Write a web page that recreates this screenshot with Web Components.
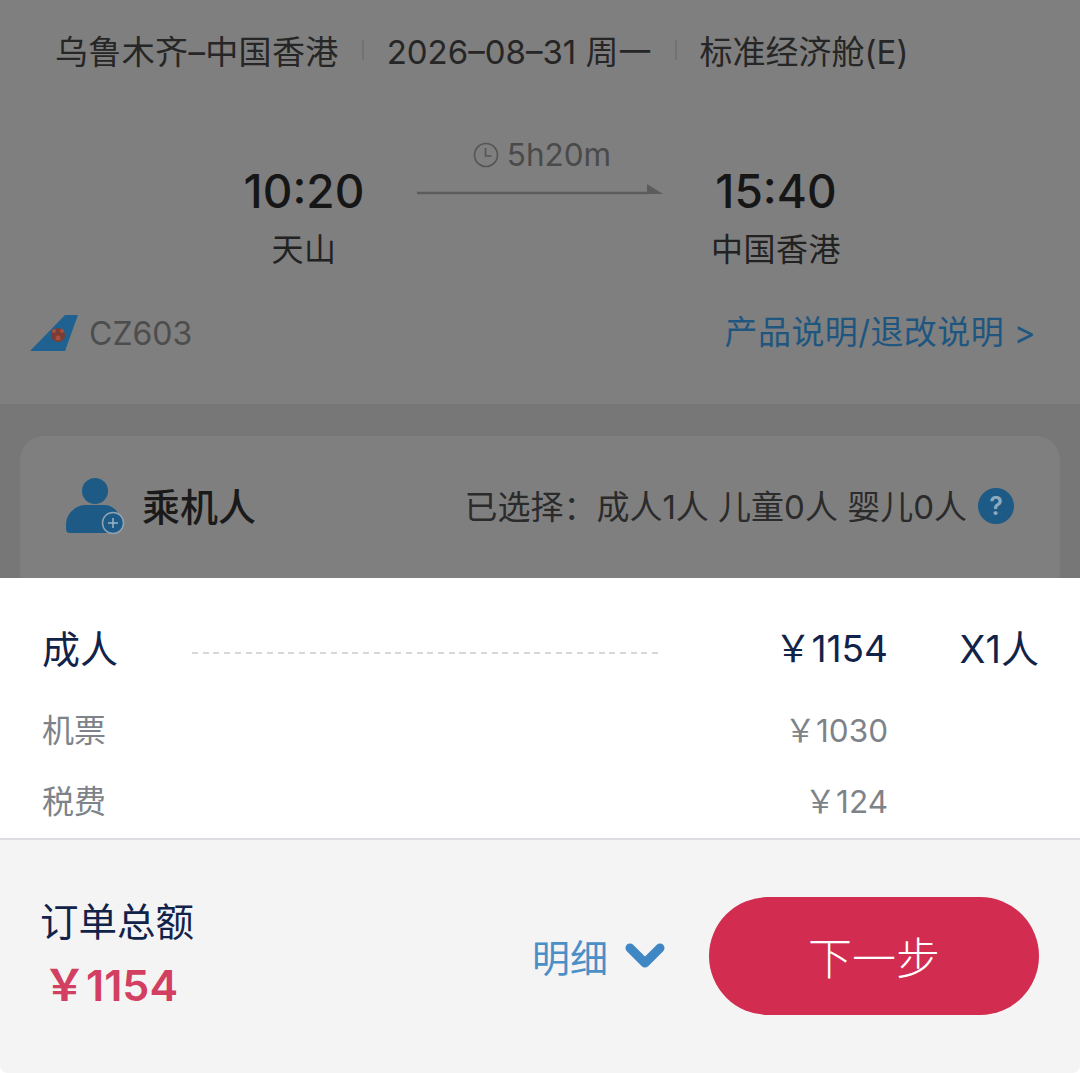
<!DOCTYPE html>
<html lang="zh">
<head>
<meta charset="utf-8">
<title>订单</title>
<style>
html, body { margin: 0; padding: 0; }
body { width: 1080px; height: 1073px; overflow: hidden; background: #fff;
  font-family: "Noto Sans CJK SC", "Liberation Sans", sans-serif; }
</style>
</head>
<body>
<booking-page>
  <flight-summary></flight-summary>
  <passenger-card></passenger-card>
  <price-sheet></price-sheet>
  <order-footer></order-footer>
</booking-page>

<script>
const LATIN = '"Inter", "Noto Sans CJK SC", sans-serif';

class BookingPage extends HTMLElement {
    constructor() {
        super();
        this.attachShadow({ mode: 'open' }).innerHTML = `
        <style>
        :host { display: flex; flex-direction: column; width: 1080px; height: 1073px; overflow: hidden; }
        </style>
        <slot></slot>`;
    }
}

class FlightSummary extends HTMLElement {
    constructor() {
        super();
        this.attachShadow({ mode: 'open' }).innerHTML = `
        <style>
        :host { display: block; height: 404px; box-sizing: border-box; background: #7f7f7f; color: #1f1f1f;
            font-family: ${LATIN}; }
        .route { display: flex; align-items: center; height: 100px; margin-bottom: 6px; padding-left: 55px; font-size: 33px; color: #262626; }
        .route span:first-child { letter-spacing: .35px; }
        .sep { width: 2px; height: 20px; background: #727272; margin: 0 23px; }
        .times { display: grid; grid-template-columns: 120px 246px 120px; column-gap: 53px; justify-content: center; height: 190px; }
        .end { display: flex; flex-direction: column; align-items: center; padding-top: 56px; }
        .time { font-size: 46px; font-weight: 500; line-height: 58px; color: #161616; }
        .place { font-size: 32px; line-height: 46px; margin-top: 7px; color: #222; white-space: nowrap; letter-spacing: .5px; }
        .mid { display: flex; flex-direction: column; align-items: stretch; padding-top: 28px; }
        .dur { display: flex; align-items: center; justify-content: center; gap: 8px; padding-left: 4px; font-size: 31.5px; line-height: 42px; color: #4a4a4a; }
        .line { display: block; margin-top: 8px; }
        .foot { display: flex; justify-content: space-between; align-items: center; padding: 0 44px 0 30px; height: 60px; margin-top: 7px; }
        .air { display: flex; align-items: center; gap: 11px; font-size: 32px; color: #4d4d4d; }
        .link { font-size: 33px; letter-spacing: .4px; color: #1f567f; margin-bottom: 6px; }
        </style>
        <div class="route">
            <span>乌鲁木齐–中国香港</span><i class="sep"></i>
            <span>2026–08–31 周一</span><i class="sep"></i>
            <span>标准经济舱(E)</span>
        </div>
        <div class="times">
            <div class="end"><span class="time">10:20</span><span class="place">天山</span></div>
            <div class="mid">
                <div class="dur">
                    <svg width="26" height="26" viewBox="0 0 26 26" fill="none" stroke="#555" stroke-width="1.6"><circle cx="13" cy="13" r="11.5"/><path d="M12.5 6v8h6"/></svg>
                    <span>5h20m</span>
                </div>
                <svg class="line" width="246" height="14" viewBox="0 0 246 14"><path d="M0 9h232" stroke="#5c5c5c" stroke-width="2.5"/><path d="M230 0l16 10h-16z" fill="#5c5c5c"/></svg>
            </div>
            <div class="end"><span class="time">15:40</span><span class="place">中国香港</span></div>
        </div>
        <div class="foot">
            <div class="air">
                <svg width="48" height="38" viewBox="0 0 48 38"><path d="M35 1H48L35 37H0z" fill="#1f6292"/><circle cx="28" cy="21" r="7" fill="#7d3c33"/><circle cx="24" cy="17" r="2" fill="#a2503f"/><circle cx="32" cy="17" r="2" fill="#a2503f"/><circle cx="28" cy="24" r="2.5" fill="#a2503f"/></svg>
                <span>CZ603</span>
            </div>
            <span class="link">产品说明/退改说明 &gt;</span>
        </div>`;
    }
}

class PassengerCard extends HTMLElement {
    constructor() {
        super();
        this.attachShadow({ mode: 'open' }).innerHTML = `
        <style>
        :host { display: block; height: 174px; box-sizing: border-box; background: #777; padding: 32px 20px 0; font-family: ${LATIN}; }
        .card { height: 142px; box-sizing: border-box; padding: 42px 46px 0; background: #7f7f7f; border-radius: 24px 24px 0 0; }
        .row { display: flex; align-items: center; justify-content: space-between; height: 56px; }
        .who { display: flex; align-items: center; gap: 16px; font-size: 38px; font-weight: 500; color: #1a1a1a; }
        .who svg { flex: none; }
        .who span { margin-bottom: 4px; }
        .sel { display: flex; align-items: center; gap: 11px; font-size: 33px; color: #2b2b2b; }
        .sel span:first-child { margin-bottom: 2px; }
        .q { width: 36px; height: 36px; border-radius: 50%; background: #1d5a86; color: #8fa9bd; font-size: 25px; font-weight: 600;
            display: flex; align-items: center; justify-content: center; }
        </style>
        <div class="card">
            <div class="row">
                <div class="who">
                    <svg width="60" height="58" viewBox="0 0 60 58"><circle cx="29" cy="14" r="13" fill="#1d5a86"/><path d="M4 56Q0 56 0 52V48C0 36 10 28 20 28H38C44 28 49 31 52 36H46A14 14 0 0 0 42 56z" fill="#1d5a86"/><circle cx="47" cy="46" r="10.5" fill="#1d5a86" stroke="#8fa3b3" stroke-width="1.5"/><path d="M47 41v10M42 46h10" stroke="#9db4c5" stroke-width="1.5"/></svg>
                    <span>乘机人</span>
                </div>
                <div class="sel"><span>已选择：成人1人 儿童0人 婴儿0人</span><span class="q">?</span></div>
            </div>
        </div>`;
    }
}

class PriceRow extends HTMLElement {
    constructor() {
        super();
        this.attachShadow({ mode: 'open' }).innerHTML = `
        <style>
        :host { display: flex; align-items: center; height: 71px; padding-left: 42px; color: #7d8388; font-size: 32px; }
        :host([main]) { color: #12234a; font-size: 38px; height: 84px; margin-bottom: 4px; }
        .label { flex: none; width: 150px; }
        .dash { flex: none; width: 470px; height: 2px; margin-top: 14px; visibility: hidden;
            background: repeating-linear-gradient(90deg, #d5d7da 0 6px, transparent 6px 10.7px); }
        :host([main]) .dash { visibility: visible; }
        .price { flex: none; width: 226px; text-align: right; font-family: ${LATIN}; font-size: 31.5px; }
        :host([main]) .price { font-size: 37px; }
        .count { flex: none; width: 151px; text-align: right; font-family: ${LATIN}; }
        </style>
        <span class="label"><slot name="label"></slot></span>
        <span class="dash"></span>
        <span class="price"><slot name="price"></slot></span>
        <span class="count"><slot name="count"></slot></span>`;
    }
}

class PriceSheet extends HTMLElement {
    constructor() {
        super();
        this.attachShadow({ mode: 'open' }).innerHTML = `
        <style>
        :host { display: block; height: 262px; box-sizing: border-box; background: #fff; padding-top: 26px; border-bottom: 2px solid #dcdde0; }
        </style>
        <price-row main><span slot="label">成人</span><span slot="price">￥1154</span><span slot="count">X1人</span></price-row>
        <price-row><span slot="label">机票</span><span slot="price">￥1030</span></price-row>
        <price-row><span slot="label">税费</span><span slot="price">￥124</span></price-row>`;
    }
}

class OrderFooter extends HTMLElement {
    constructor() {
        super();
        this.attachShadow({ mode: 'open' }).innerHTML = `
        <style>
        :host { display: flex; align-items: center; justify-content: space-between; height: 233px; box-sizing: border-box;
            padding: 0 41px 2px 42px; background: #f4f4f5; border-radius: 0 0 8px 8px; }
        .total { display: flex; flex-direction: column; padding-bottom: 3px; margin-left: -2px; }
        .t1 { font-size: 38.5px; line-height: 54px; color: #12234a; }
        .t2 { font-family: ${LATIN}; font-size: 43px; line-height: 64px; margin-top: 7px; font-weight: 600; color: #d23f60; margin-left: 3px; }
        .right { display: flex; align-items: center; }
        .more { display: flex; align-items: center; gap: 17px; font-size: 38px; color: #4a8fc6; margin-right: 44px; }
        .btn { width: 330px; height: 118px; border-radius: 59px; background: #d22c50; color: #fff; font-size: 44px; font-weight: 300;
            display: flex; align-items: center; justify-content: center; }
        </style>
        <div class="total"><span class="t1">订单总额</span><span class="t2">￥1154</span></div>
        <div class="right">
            <div class="more"><span>明细</span>
                <svg width="40" height="28" viewBox="0 0 40 28"><path d="M5 6l15 15L35 6" fill="none" stroke="#3f86c4" stroke-width="9" stroke-linecap="round" stroke-linejoin="round"/></svg>
            </div>
            <div class="btn">下一步</div>
        </div>`;
    }
}

customElements.define('booking-page', BookingPage);
customElements.define('flight-summary', FlightSummary);
customElements.define('passenger-card', PassengerCard);
customElements.define('price-row', PriceRow);
customElements.define('price-sheet', PriceSheet);
customElements.define('order-footer', OrderFooter);
</script>
</body>
</html>
